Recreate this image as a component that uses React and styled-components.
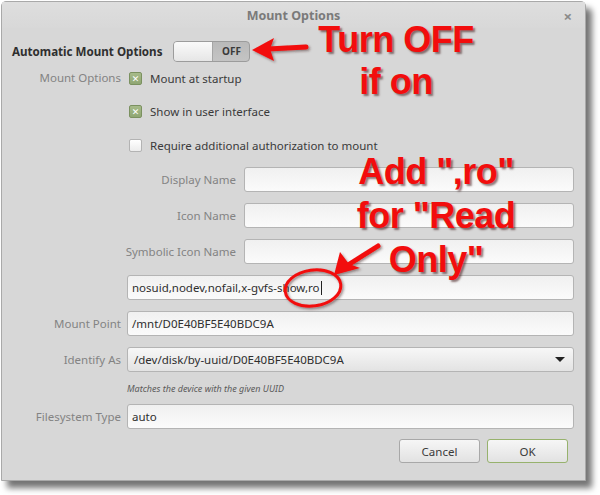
import React from 'react'
import styled, { createGlobalStyle } from 'styled-components'

const Global = createGlobalStyle`
  html, body { margin: 0; padding: 0; background: #ffffff; }
  body { font-family: "Noto Sans", "DejaVu Sans", sans-serif; }
`;

const Page = styled.div`
  position: relative;
  width: 600px;
  height: 495px;
  overflow: hidden;
`;

const Dialog = styled.div`
  margin: 1px 0 0 1px;
  width: 585px;
  height: 480px;
  background: #d7d7d7;
  border: 1px solid #a9a9a9;
  border-radius: 5px 5px 0 0;
  box-sizing: border-box;
  box-shadow: 6px 7px 6px rgba(0, 0, 0, 0.55);
  display: flex;
  flex-direction: column;
  color: #3d3d3d;
`;

const TitleBar = styled.div`
  height: 26px;
  display: flex;
  align-items: center;
  justify-content: center;
  position: relative;
  background: linear-gradient(#dedede, #d8d8d8);
  font-size: 12.5px;
  font-weight: bold;
  color: #7a7a7a;
`;

const Close = styled.span`
  position: absolute;
  right: 13px;
  top: 4px;
  font-size: 15px;
  color: #8a8a8a;
  font-weight: bold;
`;

const Body = styled.div`
  padding: 12px 11px 0 10px;
  display: flex;
  flex-direction: column;
`;

const AutoRow = styled.div`
  display: flex;
  align-items: center;
  gap: 11px;
  height: 22px;
`;

const Heading = styled.span`
  font-size: 11.6px;
  font-weight: bold;
  color: #2f2f2f;
`;

const Toggle = styled.div`
  width: 77px;
  height: 21px;
  border: 1px solid #9c9c9c;
  border-radius: 4px;
  box-sizing: border-box;
  display: flex;
  overflow: hidden;
  background: linear-gradient(#b9b9b9, #c4c4c4);
`;

const Knob = styled.div`
  width: 38px;
  background: linear-gradient(#fafafa, #e6e6e6);
  border-right: 1px solid #a5a5a5;
`;

const ToggleText = styled.div`
  flex: 1;
  display: flex;
  align-items: center;
  justify-content: center;
  font-size: 10px;
  font-weight: bold;
  color: #3a3a3a;
`;

const Grid = styled.div`
  display: grid;
  grid-template-columns: 109px 447px;
  column-gap: 6px;
  align-items: center;
  margin-top: ${p => p.$mt ?? 0}px;
`;

const Label = styled.span`
  justify-self: end;
  white-space: nowrap;
  font-size: 11.5px;
  color: #838383;
  align-self: ${p => (p.$top ? 'start' : 'center')};
  margin-top: ${p => (p.$top ? 2 : 0)}px;
`;

const Stack = styled.div`
  display: flex;
  flex-direction: column;
`;

const CheckRow = styled.label`
  display: flex;
  align-items: center;
  gap: 8px;
  height: 20px;
  padding-left: 2px;
  margin-top: ${p => p.$gap}px;
  font-size: 11.5px;
  color: #3a3a3a;
`;

const Box = styled.span`
  width: 13px;
  height: 13px;
  box-sizing: border-box;
  border-radius: 2px;
  border: 1px solid ${p => (p.$on ? '#7b9160' : '#b3b3b3')};
  background: ${p => (p.$on ? 'linear-gradient(#a7bb8a, #8fa673)' : 'linear-gradient(#ffffff, #ececec)')};
  display: flex;
  align-items: center;
  justify-content: center;
  color: #ffffff;
  font-size: 9px;
  font-weight: bold;
  line-height: 1;
`;

const SubGrid = styled.div`
  display: grid;
  grid-template-columns: 109px 330px;
  column-gap: 8px;
  row-gap: 11px;
  align-items: center;
  margin-top: 12px;
`;

const Field = styled.div`
  height: 25px;
  box-sizing: border-box;
  border: 1px solid #b4b4b4;
  border-radius: 3px;
  background: linear-gradient(#f0f0f0, #fbfbfb);
  display: flex;
  align-items: center;
  padding: 0 4px;
  font-size: 11.5px;
  color: #2e2e2e;
  white-space: nowrap;
  grid-column: ${p => (p.$wide ? '1 / span 2' : 'auto')};
`;

const Caret = styled.span`
  display: inline-block;
  width: 1px;
  height: 14px;
  background: #222;
  margin-left: 1px;
`;

const Combo = styled(Field)`
  background: linear-gradient(#f7f7f7, #e3e3e3);
  justify-content: space-between;
  padding: 0 8px 0 6px;
`;

const Arrow = styled.span`
  width: 0;
  height: 0;
  border-left: 5px solid transparent;
  border-right: 5px solid transparent;
  border-top: 5px solid #222;
`;

const Hint = styled.span`
  font-size: 9px;
  font-style: italic;
  color: #5a5a5a;
  height: 14px;
  line-height: 14px;
`;

const Rows = styled(Grid)`
  row-gap: 11px;
`;

const Buttons = styled.div`
  display: flex;
  justify-content: flex-end;
  gap: 7px;
  padding-right: 6px;
  margin-top: 10px;
`;

const Button = styled.div`
  width: 81px;
  height: 24px;
  box-sizing: border-box;
  border: 1px solid ${p => (p.$primary ? '#97b26d' : '#a8a8a8')};
  border-radius: 3px;
  background: linear-gradient(#f6f6f6, #e2e2e2);
  display: flex;
  align-items: center;
  justify-content: center;
  font-size: 11.5px;
  color: #3a3a3a;
`;

const Note = styled.div`
  position: absolute;
  left: ${p => p.$x}px;
  top: ${p => p.$y}px;
  width: ${p => p.$w}px;
  text-align: center;
  font-family: "Liberation Sans", Arial, sans-serif;
  font-weight: bold;
  font-size: 36px;
  line-height: ${p => p.$lh}px;
  color: #f20d0d;
  text-shadow: 2px 2px 2px rgba(60, 20, 20, 0.55);
  letter-spacing: -0.5px;
`;

const Overlay = styled.svg`
  position: absolute;
  left: 0;
  top: 0;
  pointer-events: none;
`;

function Check({ on, children, gap }) {
  return (
    <CheckRow $gap={gap}>
      <Box $on={on}>{on ? '✕' : ''}</Box>
      {children}
    </CheckRow>
  );
}

export default function App() {
  return (
    <Page>
      <Global />
      <Dialog>
        <TitleBar>
          Mount Options
          <Close>×</Close>
        </TitleBar>
        <Body>
          <AutoRow>
            <Heading>Automatic Mount Options</Heading>
            <Toggle>
              <Knob />
              <ToggleText>OFF</ToggleText>
            </Toggle>
          </AutoRow>
          <Grid $mt={6}>
            <Label $top>Mount Options</Label>
            <Stack>
              <Check on gap={0}>Mount at startup</Check>
              <Check on gap={13}>Show in user interface</Check>
              <Check gap={14}>Require additional authorization to mount</Check>
              <SubGrid>
                <Label>Display Name</Label>
                <Field />
                <Label>Icon Name</Label>
                <Field />
                <Label>Symbolic Icon Name</Label>
                <Field />
                <Field $wide>
                  nosuid,nodev,nofail,x-gvfs-show,ro<Caret />
                </Field>
              </SubGrid>
            </Stack>
          </Grid>
          <Rows $mt={11}>
            <Label>Mount Point</Label>
            <Field>/mnt/D0E40BF5E40BDC9A</Field>
            <Label>Identify As</Label>
            <Combo>
              /dev/disk/by-uuid/D0E40BF5E40BDC9A
              <Arrow />
            </Combo>
          </Rows>
          <Grid $mt={10}>
            <span />
            <Hint>Matches the device with the given UUID</Hint>
          </Grid>
          <Rows $mt={8}>
            <Label>Filesystem Type</Label>
            <Field>auto</Field>
          </Rows>
          <Buttons>
            <Button>Cancel</Button>
            <Button $primary>OK</Button>
          </Buttons>
        </Body>
      </Dialog>

      <Note $x={300} $y={19} $w={192} $lh={42}>Turn OFF<br />if on</Note>
      <Note $x={338} $y={150} $w={196} $lh={44}>Add ",ro"<br />for "Read<br />Only"</Note>

      <Overlay width="600" height="495" viewBox="0 0 600 495">
        <defs>
          <filter id="sh" x="-20%" y="-20%" width="140%" height="140%">
            <feDropShadow dx="1.5" dy="1.5" stdDeviation="1" floodColor="#3a1a1a" floodOpacity="0.5" />
          </filter>
        </defs>
        <g fill="#f20d0d" stroke="#f20d0d" filter="url(#sh)">
          <line x1="306" y1="47" x2="268" y2="49" strokeWidth="5" strokeLinecap="round" />
          <polygon points="252,50 274,38 270,49 274,61" stroke="none" />
          <line x1="378" y1="246" x2="348" y2="265" strokeWidth="5" strokeLinecap="round" />
          <polygon points="334,275 340,252 349,264 360,268" stroke="none" />
          <ellipse cx="313" cy="288" rx="28" ry="18" fill="none" strokeWidth="3" transform="rotate(-8 313 288)" />
        </g>
      </Overlay>
    </Page>
  );
}
